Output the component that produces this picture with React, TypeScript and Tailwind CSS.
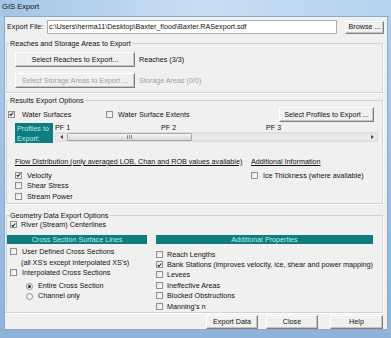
import React from "react";

function Check({ checked }: { checked?: boolean }) {
  return (
    <span className="flex h-[7px] w-[7px] shrink-0 items-center justify-center border border-[#8f8f8f] bg-gradient-to-br from-[#e4e4e4] to-white">
      {checked && (
        <svg width="6" height="6" viewBox="0 0 6 6">
          <path d="M0.8 3 L2.3 4.6 L5.2 1.2" fill="none" stroke="#1e1e1e" strokeWidth="1.3" />
        </svg>
      )}
    </span>
  );
}

function Radio({ checked }: { checked?: boolean }) {
  return (
    <span className="flex h-[7px] w-[7px] shrink-0 items-center justify-center rounded-full border border-[#8f8f8f] bg-gradient-to-br from-[#e4e4e4] to-white">
      {checked && <span className="h-[3px] w-[3px] rounded-full bg-[#2a2a2a]" />}
    </span>
  );
}

function CheckRow({
  label,
  checked,
  gap = "ml-[5px]",
  className = "",
}: {
  label: string;
  checked?: boolean;
  gap?: string;
  className?: string;
}) {
  return (
    <div className={"flex items-center " + className}>
      <Check checked={checked} />
      <span className={gap + " whitespace-nowrap"}>{label}</span>
    </div>
  );
}

function Button({
  children,
  className = "",
  disabled,
}: {
  children: React.ReactNode;
  className?: string;
  disabled?: boolean;
}) {
  return (
    <div
      className={
        "flex shrink-0 items-center justify-center whitespace-nowrap border border-t-white border-l-white border-r-[#7e7e7e] border-b-[#7e7e7e] bg-[#f0f0f0] shadow-[inset_-1px_-1px_0_#c4c4c4] " +
        (disabled ? "text-[#a2a2a2] " : "") +
        className
      }
    >
      {children}
    </div>
  );
}

function Group({
  title,
  className = "",
  children,
}: {
  title: string;
  className?: string;
  children: React.ReactNode;
}) {
  return (
    <div className={"ml-[1px] w-[377px] border border-[#cdd4da] shadow-[1px_1px_0_#fff] " + className}>
      <div className="-mt-[5px] ml-[2px] h-[9px] w-fit bg-[#f0f0f0] px-[1px] leading-[9px]">
        {title}
      </div>
      {children}
    </div>
  );
}

export default function App() {
  return (
    <div className="flex h-[338px] w-[391px] flex-col overflow-hidden bg-gradient-to-b from-[#b0cdeb] to-[#8db3db] font-['Liberation_Sans',Arial,sans-serif] text-[7.2px] leading-none text-[#111]">
      <div className="flex h-[16px] items-center bg-gradient-to-r from-[#a5c5e6] via-[#c9def2] to-[#b5d2ee] pb-[2px] pl-[2px] text-[7.6px]">
        GIS Export
      </div>

      <div className="ml-[4px] flex h-[314px] w-[384px] flex-col border border-[#8ea9c7] bg-[#f0f0f0]">
        {/* export file */}
        <div className="mt-[3px] flex h-[14px] items-center pl-[2px]">
          <span className="w-[40px]">Export File:</span>
          <div className="flex h-[14px] w-[290px] items-center border border-[#a9adb4] bg-white pl-[1px]">
            {"c:\\Users\\herma11\\Desktop\\Baxter_flood\\Baxter.RASexport.sdf"}
          </div>
          <Button className="ml-[8px] h-[13px] w-[39px]">Browse ...</Button>
        </div>

        {/* reaches */}
        <Group title="Reaches and Storage Areas to Export" className="mt-[9px] h-[50px]">
          <div className="ml-[8px] mt-[4px] flex items-center">
            <Button className="h-[15px] w-[120px]">Select Reaches to Export...</Button>
            <span className="ml-[4px]">Reaches (3/3)</span>
          </div>
          <div className="ml-[8px] mt-[6px] flex items-center">
            <Button disabled className="h-[15px] w-[120px]">
              Select Storage Areas to Export ...
            </Button>
            <span className="ml-[4px] text-[#a2a2a2]">Storage Areas (0/0)</span>
          </div>
        </Group>

        {/* results */}
        <Group title="Results Export Options" className="mt-[7px] h-[104px]">
          <div className="mt-[2px] flex h-[15px] items-center">
            <CheckRow label="Water Surfaces" checked gap="ml-[7px]" className="ml-[1px] w-[98px]" />
            <CheckRow label="Water Surface Extents" className="flex-1" />
            <Button className="mr-[8px] h-[15px] w-[95px]">Select Profiles to Export ...</Button>
          </div>

          <div className="mt-[1px] flex">
            <div className="ml-[8px] h-[20px] w-[38px] bg-[#0f7d7d] pl-[2px] pt-[1px] leading-[9.5px] text-[#b4efee]">
              Profiles to
              <br />
              Export:
            </div>
            <div className="ml-[2px] flex w-[323px] flex-col">
              <div className="flex h-[9px] items-center">
                <span className="w-[106px]">PF 1</span>
                <span className="w-[105px]">PF 2</span>
                <span>PF 3</span>
              </div>
              <div className="flex h-[10px] items-center border border-[#dcdcdc] bg-gradient-to-b from-[#e2e2e2] via-[#ececec] to-[#e2e2e2]">
                <div className="flex w-[10px] items-center justify-center">
                  <svg width="3" height="4" viewBox="0 0 3 4">
                    <path d="M3 0 L0 2 L3 4 Z" fill="#4a4a4a" />
                  </svg>
                </div>
                <div className="ml-[1px] flex h-[8px] w-[125px] items-center justify-center gap-[1px] rounded-[1px] border border-[#a9a9a9] bg-gradient-to-b from-[#f6f6f6] to-[#d9d9d9]">
                  <span className="h-[4px] w-px bg-[#8a8a8a]" />
                  <span className="h-[4px] w-px bg-[#8a8a8a]" />
                  <span className="h-[4px] w-px bg-[#8a8a8a]" />
                </div>
                <div className="flex-1" />
                <div className="flex w-[10px] items-center justify-center">
                  <svg width="3" height="4" viewBox="0 0 3 4">
                    <path d="M0 0 L3 2 L0 4 Z" fill="#4a4a4a" />
                  </svg>
                </div>
              </div>
            </div>
          </div>

          <div className="mt-[14px] flex h-[9px] items-center">
            <span className="ml-[8px] w-[236px] underline">
              Flow Distribution (only averaged LOB, Chan and ROB values available)
            </span>
            <span className="underline">Additional Information</span>
          </div>

          <div className="mt-[4px] flex h-[10.5px] items-center">
            <CheckRow label="Velocity" checked className="ml-[8px] w-[236px]" />
            <CheckRow label="Ice Thickness (where available)" />
          </div>
          <div className="flex h-[10.5px] items-center">
            <CheckRow label="Shear Stress" className="ml-[8px]" />
          </div>
          <div className="flex h-[10.5px] items-center">
            <CheckRow label="Stream Power" className="ml-[8px]" />
          </div>
        </Group>

        {/* geometry */}
        <Group title="Geometry Data Export Options" className="mt-[11px] h-[98px]">
          <div className="flex h-[10px] items-center">
            <CheckRow label="River (Stream) Centerlines" checked gap="ml-[4px]" className="ml-[3px]" />
          </div>
          <div className="mt-[5px] flex">
            <div className="h-[9px] w-[140px] bg-[#0f7d7d] text-center leading-[9px] text-[#b4efee]">
              Cross Section Surface Lines
            </div>
            <div className="ml-[9px] h-[9px] w-[217px] bg-[#0f7d7d] text-center leading-[9px] text-[#b4efee]">
              Additional Properties
            </div>
          </div>
          <div className="flex">
            <div className="flex w-[149px] flex-col pl-[3px]">
              <div className="mt-[3px] flex h-[10px] items-center">
                <CheckRow label="User Defined Cross Sections" />
              </div>
              <div className="flex h-[11px] items-center pl-[11px]">
                (all XS's except Interpolated XS's)
              </div>
              <div className="flex h-[10px] items-center">
                <CheckRow label="Interpolated Cross Sections" />
              </div>
              <div className="mt-[3px] flex h-[10px] items-center pl-[16px]">
                <Radio checked />
                <span className="ml-[5px]">Entire Cross Section</span>
              </div>
              <div className="flex h-[10px] items-center pl-[16px]">
                <Radio />
                <span className="ml-[5px]">Channel only</span>
              </div>
            </div>
            <div className="mt-[5px] flex flex-col">
              <div className="flex h-[10.4px] items-center">
                <CheckRow label="Reach Lengths" gap="ml-[4px]" />
              </div>
              <div className="flex h-[10.4px] items-center">
                <CheckRow
                  label="Bank Stations (improves velocity, ice, shear and power mapping)"
                  checked
                  gap="ml-[4px]"
                />
              </div>
              <div className="flex h-[10.4px] items-center">
                <CheckRow label="Levees" gap="ml-[4px]" />
              </div>
              <div className="flex h-[10.4px] items-center">
                <CheckRow label="Ineffective Areas" gap="ml-[4px]" />
              </div>
              <div className="flex h-[10.4px] items-center">
                <CheckRow label="Blocked Obstructions" gap="ml-[4px]" />
              </div>
              <div className="flex h-[10.4px] items-center">
                <CheckRow label="Manning's n" gap="ml-[4px]" />
              </div>
            </div>
          </div>
        </Group>

        {/* buttons */}
        <div className="mr-[4px] mt-[2px] flex h-[14px] justify-end">
          <Button className="h-[14px] w-[52px]">Export Data</Button>
          <Button className="ml-[8px] h-[14px] w-[52px]">Close</Button>
          <Button className="ml-[12px] h-[14px] w-[53px]">Help</Button>
        </div>
      </div>
    </div>
  );
}
